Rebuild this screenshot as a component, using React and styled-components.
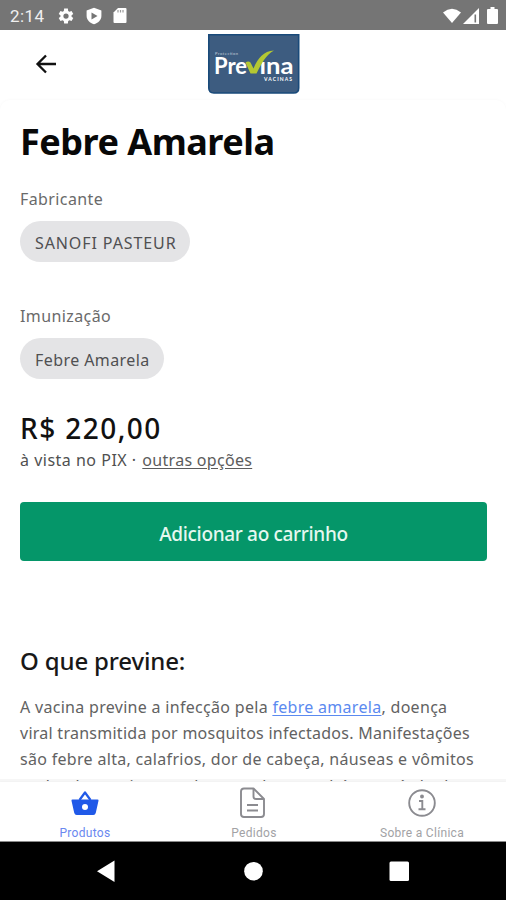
import React from "react";
import styled, { createGlobalStyle } from "styled-components";

const GlobalStyle = createGlobalStyle`
  * {
    box-sizing: border-box;
  }

  body {
    margin: 0;
    background-color: #ffffff;
    font-family: "Noto Sans", sans-serif;
  }
`;

const Screen = styled.div`
  display: flex;
  flex-direction: column;
  width: 506px;
  height: 900px;
  overflow: hidden;
`;

const StatusBar = styled.div`
  display: flex;
  align-items: center;
  justify-content: space-between;
  height: 30px;
  flex-shrink: 0;
  padding: 1px 8px 0 10px;
  background-color: #757575;
  color: #ffffff;
`;

const StatusGroup = styled.div`
  display: flex;
  align-items: center;
  gap: ${(props) => props.$gap};
`;

const Clock = styled.span`
  font-family: Roboto, sans-serif;
  font-size: 17px;
  line-height: 20px;
  letter-spacing: 0.4px;
  color: #f0f0f0;
  margin-right: 2px;
`;

const Header = styled.header`
  display: grid;
  grid-template-columns: 208px 92px 1fr;
  align-items: center;
  height: 70px;
  flex-shrink: 0;
  padding-bottom: 2px;
`;

const BackButton = styled.button`
  display: flex;
  width: 24px;
  padding: 0;
  margin-left: 35px;
  border: none;
  background: none;
`;

const Content = styled.main`
  flex: 1;
  min-height: 0;
  overflow: hidden;
  padding: 18px 19px 0 20px;
  border-radius: 10px 10px 0 0;
  box-shadow: 0 0 3px rgba(0, 0, 0, 0.04);
`;

const Title = styled.h1`
  margin: 0 0 23px;
  font-size: 36px;
  line-height: 48px;
  font-weight: 700;
  letter-spacing: -0.5px;
  color: #080808;
`;

const Field = styled.section`
  height: 117px;
`;

const Label = styled.div`
  font-size: 16px;
  line-height: 20px;
  letter-spacing: 0.4px;
  color: #6a6a6a;
`;

const Chip = styled.span`
  display: inline-flex;
  align-items: center;
  height: 41px;
  margin-top: 12px;
  padding: 2px 14px 0 15px;
  border-radius: 21px;
  background-color: #e4e4e6;
  font-size: 16px;
  letter-spacing: ${(props) => props.$spacing};
  color: #505052;
`;

const Price = styled.div`
  margin-top: -13px;
  font-size: 28px;
  line-height: 36px;
  letter-spacing: 1.45px;
  font-weight: 500;
  color: #111111;
`;

const Payment = styled.div`
  font-size: 16px;
  line-height: 28px;
  letter-spacing: 0.5px;
  white-space: pre;
  color: #505050;
`;

const OtherOptions = styled.a`
  margin-left: 1px;
  letter-spacing: 0.3px;
  color: #5c5c5c;
  text-decoration: underline;
  text-underline-offset: 2px;
`;

const AddButton = styled.button`
  display: block;
  width: 467px;
  height: 59px;
  margin: 28px 0 82px;
  padding: 4px 0 0;
  border: none;
  border-radius: 4px;
  background-color: #059669;
  color: #e6f8f0;
  font-family: inherit;
  font-size: 19px;
  font-weight: 500;
  letter-spacing: -0.33px;
`;

const Subtitle = styled.h2`
  margin: 0 0 15px;
  font-size: 24px;
  line-height: 36px;
  font-weight: 500;
  letter-spacing: -0.15px;
  color: #181818;
`;

const Text = styled.p`
  margin: 0;
  font-size: 16px;
  line-height: 26.2px;
  color: #626262;
`;

const Line = styled.span`
  display: block;
  white-space: nowrap;
  letter-spacing: ${(props) => props.$spacing || "0.3px"};
`;

const TextLink = styled.a`
  color: #5b8af0;
  text-decoration: underline;
  text-underline-offset: 2px;
`;

/* the translucent border lets the scrolled text show through */
const TabBar = styled.nav`
  display: grid;
  grid-template-columns: repeat(3, 1fr);
  height: 63px;
  flex-shrink: 0;
  margin-top: -2px;
  padding-left: 2px;
  border-top: 3px solid rgba(0, 0, 0, 0.035);
  border-bottom: 1px solid #8a8a8a;
  background-color: #ffffff;
  background-clip: padding-box;
`;

const Tab = styled.div`
  display: flex;
  flex-direction: column;
  align-items: center;
  padding-top: 5px;
  color: ${(props) => (props.$active ? "#2059e8" : "#8b8b90")};
`;

const TabIcon = styled.span`
  display: flex;
  align-items: center;
  height: 32px;
  margin-right: ${(props) => props.$shift || "0"};
`;

const TabLabel = styled.span`
  margin-top: 7px;
  margin-right: ${(props) => (props.$active ? "2px" : "0")};
  font-family: Roboto, sans-serif;
  font-size: 12px;
  line-height: 14px;
  letter-spacing: 0.3px;
  color: ${(props) => (props.$active ? "#6a88f0" : "#a2a2a5")};
`;

const SystemBar = styled.div`
  display: flex;
  justify-content: center;
  height: 58px;
  flex-shrink: 0;
  background-color: #000000;
`;

const SignalGroup = styled.div`
  display: flex;
  align-items: center;
  gap: 2px;
  margin-right: 3px;
`;

const StatusIcons = () => (
  <>
    <svg width="18" height="18" viewBox="0 0 24 24" fill="#fff">
      <path d="M19.4 13a7 7 0 0 0 0-2l2.3-1.8-2.3-4-2.8 1.1-1.7-1L14.5 2h-5l-.4 3.3-1.7 1-2.8-1.1-2.3 4L4.6 11a7 7 0 0 0 0 2l-2.3 1.8 2.3 4 2.8-1.1 1.7 1 .4 3.3h5l.4-3.3 1.7-1 2.8 1.1 2.3-4zM12 15.5a3.5 3.5 0 1 1 0-7 3.5 3.5 0 0 1 0 7z" />
    </svg>
    <svg width="16" height="18" viewBox="0 0 16 18">
      <path d="M8 .8l7.4 2.7V9c0 4-3.4 7-7.4 8.200C4 16 .6 13 .6 9V3.500z" fill="#fff" />
      <path d="M5.5 5.500l6 3.500-6 3.500z" fill="#757575" />
    </svg>
    <svg width="14" height="17" viewBox="0 0 14 17">
      <path
        d="M5 1h7.500Q13.500 1 13.500 2v13q0 1-1 1h-11q-1 0-1-1V5.500z"
        fill="#fff"
      />
      <path d="M5 3v2.500M7.500 3v2.500M10 3v2.500" stroke="#9b9b9b" strokeWidth="1.2" />
    </svg>
  </>
);

const SignalIcons = () => (
  <>
    <SignalGroup>
      <svg width="18" height="16" viewBox="0 0 19 16">
        <path d="M0 4.3Q9.500-3.500 19 4.300L9.500 15.500z" fill="#fff" />
      </svg>
      <svg width="16" height="16" viewBox="0 0 16 16">
        <path d="M0 16L16 0v16z" fill="#fff" />
        <path d="M12.3 6.500v8" stroke="#757575" strokeWidth="1.6" />
      </svg>
    </SignalGroup>
    <svg width="11" height="17" viewBox="0 0 11 17">
      <path
        d="M3.500 0h4v2H10q1 0 1 1v13q0 1-1 1H1q-1 0-1-1V3q0-1 1-1h2.500z"
        fill="#fff"
      />
    </svg>
  </>
);

const Logo = () => (
  <svg width="92" height="60" viewBox="0 0 92 60">
    <path
      d="M.8.8H90.700V54q0 5-5 5H5.800q-5 0-5-5z"
      fill="#3d5c80"
      stroke="#194a7a"
      strokeWidth="1.6"
    />
    <g fontFamily="Lato, sans-serif" fill="#fff">
      <text x="7" y="20.5" fontSize="4" textLength="23" fill="#c3ced9">
        Protection
      </text>
      <text
        x="6"
        y="39.5"
        fontSize="22"
        fontWeight="700"
        textLength="33"
        lengthAdjust="spacingAndGlyphs"
      >
        Pre
      </text>
      <text
        x="51.5"
        y="39.5"
        fontSize="22"
        fontWeight="700"
        textLength="34"
        lengthAdjust="spacingAndGlyphs"
      >
        ına
      </text>
      <text x="56" y="46.5" fontSize="5" fontWeight="700" textLength="28">
        VACINAS
      </text>
    </g>
    <path
      d="M37.500 28.500q3-2 5 0l3 6C49.500 25 55 17 66 16.500c-8 4-12.500 13-17.500 23h-6z"
      fill="#b4c832"
    />
  </svg>
);

const BasketIcon = () => (
  <svg width="28" height="28" viewBox="0 0 28 28">
    <path
      d="M8.500 11L14 3.500 19.500 11"
      fill="none"
      stroke="currentColor"
      strokeWidth="2.2"
      strokeLinejoin="round"
    />
    <path
      d="M1.500 10.500h25q1.300 0 1 1.200l-2.700 12Q24.300 26 22.300 26H5.700q-2 0-2.500-2.300l-2.700-12Q.2 10.500 1.500 10.500z"
      fill="currentColor"
    />
    <circle cx="14" cy="18" r="3" fill="#fff" />
  </svg>
);

const DocumentIcon = () => (
  <svg
    width="26"
    height="32"
    viewBox="0 0 26 32"
    fill="none"
    stroke="currentColor"
    strokeWidth="1.9"
    strokeLinejoin="round"
  >
    <path d="M4 1.500h9.500L24 12V27q0 3-3 3H4q-3 0-3-3V4.500q0-3 3-3z" />
    <path d="M13.500 1.500v8q0 2.500 2.500 2.500h8M7 18h11M7 23.500h11" />
  </svg>
);

const InfoIcon = () => (
  <svg
    width="28"
    height="28"
    viewBox="0 0 28 28"
    fill="none"
    stroke="currentColor"
    strokeWidth="1.9"
  >
    <circle cx="14" cy="14" r="12.8" />
    <path d="M11 12h3.300v8M10.500 20.300h7" />
    <circle cx="14" cy="7.5" r="1" fill="currentColor" />
  </svg>
);

const App = () => {
  return (
    <>
      <GlobalStyle />
      <Screen>
        <StatusBar>
          <StatusGroup $gap="11px">
            <Clock>2:14</Clock>
            <StatusIcons />
          </StatusGroup>
          <StatusGroup $gap="5px">
            <SignalIcons />
          </StatusGroup>
        </StatusBar>
        <Header>
          <BackButton aria-label="Voltar">
            <svg
              width="24"
              height="24"
              viewBox="0 0 24 24"
              fill="none"
              stroke="#111"
              strokeWidth="2.3"
            >
              <path d="M11 3.500L2.500 12l8.500 8.500M3 12h18" />
            </svg>
          </BackButton>
          <Logo />
        </Header>
        <Content>
          <Title>Febre Amarela</Title>
          <Field>
            <Label>Fabricante</Label>
            <Chip $spacing="0.9px">SANOFI PASTEUR</Chip>
          </Field>
          <Field>
            <Label>Imunização</Label>
            <Chip $spacing="0.42px">Febre Amarela</Chip>
          </Field>
          <Price>R$ 220,00</Price>
          <Payment>
            à vista no PIX · <OtherOptions>outras opções</OtherOptions>
          </Payment>
          <AddButton>Adicionar ao carrinho</AddButton>
          <Subtitle>O que previne:</Subtitle>
          <Text>
            <Line $spacing="0.3px">
              A vacina previne a infecção pela{" "}
              <TextLink>febre amarela</TextLink>, doença
            </Line>
            <Line $spacing="0.26px">
              viral transmitida por mosquitos infectados. Manifestações
            </Line>
            <Line $spacing="0.31px">
              são febre alta, calafrios, dor de cabeça, náuseas e vômitos
            </Line>
            <Line>podendo ocasionar pele amarela e, também, período de</Line>
          </Text>
        </Content>
        <TabBar>
          <Tab $active>
            <TabIcon $shift="2px">
              <BasketIcon />
            </TabIcon>
            <TabLabel $active>Produtos</TabLabel>
          </Tab>
          <Tab>
            <TabIcon $shift="2px">
              <DocumentIcon />
            </TabIcon>
            <TabLabel>Pedidos</TabLabel>
          </Tab>
          <Tab>
            <TabIcon>
              <InfoIcon />
            </TabIcon>
            <TabLabel>Sobre a Clínica</TabLabel>
          </Tab>
        </TabBar>
        <SystemBar>
          <svg width="506" height="58" viewBox="0 0 506 58" fill="#fff">
            <path d="M114.500 18.500v21.500L97 29.200z" />
            <circle cx="253.5" cy="29.2" r="9.3" />
            <rect x="389.5" y="19.5" width="19.5" height="19.5" rx="1.5" />
          </svg>
        </SystemBar>
      </Screen>
    </>
  );
};

export default App;
